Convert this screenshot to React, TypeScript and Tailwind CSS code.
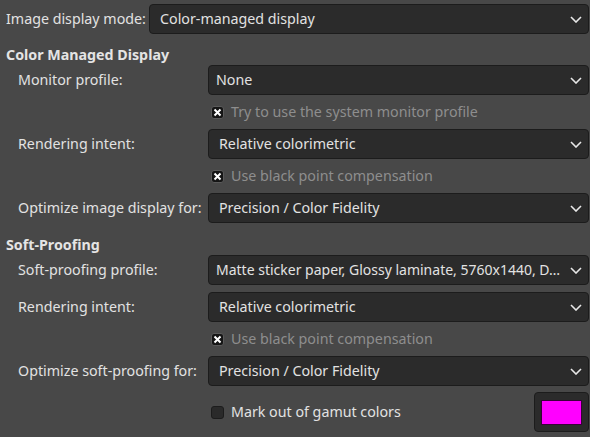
import React from "react";

const Chevron = () => (
  <svg width="12" height="7" viewBox="0 0 12 7" className="shrink-0">
    <path d="M1 1 L6 6 L11 1" fill="none" stroke="#e8e8e8" strokeWidth="1.6" />
  </svg>
);

const Combo = ({ text, pl, className = "" }: { text: string; pl: string; className?: string }) => (
  <div
    className={`flex h-[30px] min-w-0 flex-1 items-center justify-between rounded-[4px] border border-[#1c1c1c] bg-[#2b2b2b] pr-[6px] text-[#e2e2e2] ${pl} ${className}`}
  >
    <span className="min-w-0 truncate pr-[4px]">{text}</span>
    <Chevron />
  </div>
);

const Check = ({ checked, text, muted }: { checked: boolean; text: string; muted?: boolean }) => (
  <div className="flex h-[26px] items-center pl-[211px]">
    {checked ? (
      <div className="flex h-[13px] w-[13px] items-center justify-center rounded-[3px] border border-[#5a5a5a] bg-[#151515]">
        <svg width="9" height="9" viewBox="0 0 9 9">
          <path d="M1.5 1.5 L7.5 7.5 M7.5 1.5 L1.5 7.5" stroke="#ffffff" strokeWidth="2" />
        </svg>
      </div>
    ) : (
      <div className="h-[13px] w-[13px] rounded-[3px] border border-[#1c1c1c] bg-[#2a2a2a]" />
    )}
    <span className={`ml-[7px] ${muted ? "text-[#8e8e8e]" : "text-[#e2e2e2]"}`}>{text}</span>
  </div>
);

const Row = ({ label, text, pl, className = "", comboClass = "" }: { label: string; text: string; pl: string; className?: string; comboClass?: string }) => (
  <div className={`flex items-center ${className}`}>
    <div className="w-[208px] shrink-0 pl-[18px] text-[#e2e2e2]">{label}</div>
    <Combo text={text} pl={pl} className={comboClass} />
  </div>
);

export default function App() {
  return (
    <div
      className="h-[437px] w-[590px] overflow-hidden bg-[#484848] pr-[1px] text-[14.25px] leading-[20px]"
      style={{ fontFamily: '"Noto Sans", "Open Sans", sans-serif' }}
    >
      <div className="flex items-center pt-[4px]">
        <div className="w-[149px] shrink-0 pl-[6px] text-[#e2e2e2]">Image display mode:</div>
        <Combo text="Color-managed display" pl="pl-[10px]" />
      </div>

      <div className="mt-[11px] h-[20px] pl-[6px] font-bold text-[#e4e4e4]">Color Managed Display</div>
      <Row label="Monitor profile:" text="None" pl="pl-[7px]" />
      <div className="my-[4px]">
        <Check checked muted text="Try to use the system monitor profile" />
      </div>
      <Row label="Rendering intent:" text="Relative colorimetric" pl="pl-[10px]" />
      <div className="my-[4px]">
        <Check checked muted text="Use black point compensation" />
      </div>
      <Row label="Optimize image display for:" text="Precision / Color Fidelity" pl="pl-[10px]" />

      <div className="mt-[12px] h-[20px] pl-[6px] font-bold text-[#e4e4e4]">Soft-Proofing</div>
      <Row
        label="Soft-proofing profile:"
        text="Matte sticker paper, Glossy laminate, 5760x1440, D…"
        pl="pl-[7px]"
        comboClass="text-[14px]"
      />
      <Row label="Rendering intent:" text="Relative colorimetric" pl="pl-[10px]" className="mt-[7px]" />
      <div className="my-[4px]">
        <Check checked muted text="Use black point compensation" />
      </div>
      <Row label="Optimize soft-proofing for:" text="Precision / Color Fidelity" pl="pl-[10px]" />

      <div className="mt-[6px] flex h-[40px] items-center">
        <div className="flex-1">
          <Check checked={false} text="Mark out of gamut colors" />
        </div>
        <div className="flex h-[40px] w-[55px] items-center justify-center rounded-[4px] border border-[#1c1c1c] bg-[#2b2b2b]">
          <div className="h-[25px] w-[41px] border border-[#3a003a] bg-[#ff00ff]" />
        </div>
      </div>
    </div>
  );
}
